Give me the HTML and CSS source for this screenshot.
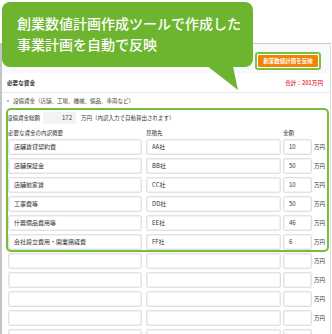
FILE: index.html
```html
<!DOCTYPE html>
<html lang="ja">
<head>
<meta charset="utf-8">
<link rel="stylesheet" href="styles.css">
</head>
<body>
<div class="frame">
  <div class="head">
    <div class="ring"><div class="btn">創業数値計画を反映</div></div>
  </div>
  <div class="title-row">
    <span class="title">必要な資金</span>
    <span class="total">合計：201万円</span>
  </div>
  <div class="sub"><span class="dot"></span>設備資金（店舗、工場、機械、備品、車両など）</div>
  <div class="detail">
    <div class="sum-row">
      <span class="sum-label">設備資金総額</span>
      <span class="sum-box">172</span>
      <span class="sum-note">万円（内訳入力で自動算出されます）</span>
    </div>
    <div class="thead">
      <span class="c1 h">必要な資金の内訳概要</span>
      <span class="c2 h">見積先</span>
      <span class="c3 h">金額</span>
    </div>
    <div class="row"><span class="box c1">店舗賃貸契約費</span><span class="box c2">AA社</span><span class="box c3">10</span><span class="unit">万円</span></div>
    <div class="row"><span class="box c1">店舗保証金</span><span class="box c2">BB社</span><span class="box c3">50</span><span class="unit">万円</span></div>
    <div class="row"><span class="box c1">店舗前家賃</span><span class="box c2">CC社</span><span class="box c3">10</span><span class="unit">万円</span></div>
    <div class="row"><span class="box c1">工事費等</span><span class="box c2">DD社</span><span class="box c3">50</span><span class="unit">万円</span></div>
    <div class="row"><span class="box c1">什器備品費用等</span><span class="box c2">EE社</span><span class="box c3">46</span><span class="unit">万円</span></div>
    <div class="row"><span class="box c1">会社設立費用・開業諸経費</span><span class="box c2">FF社</span><span class="box c3">6</span><span class="unit">万円</span></div>
    <div class="row"><span class="box c1"></span><span class="box c2"></span><span class="box c3"></span><span class="unit">万円</span></div>
    <div class="row"><span class="box c1"></span><span class="box c2"></span><span class="box c3"></span><span class="unit">万円</span></div>
    <div class="row"><span class="box c1"></span><span class="box c2"></span><span class="box c3"></span><span class="unit">万円</span></div>
    <div class="row"><span class="box c1"></span><span class="box c2"></span><span class="box c3"></span><span class="unit">万円</span></div>
    <div class="row"><span class="box c1"></span><span class="box c2"></span><span class="box c3"></span></div>
    <div class="highlight"></div>
  </div>
</div>
<div class="bubble">創業数値計画作成ツールで作成した<br>事業計画を自動で反映</div>
</body>
</html>
```

FILE: styles.css
```css
html, body {
  margin: 0;
  padding: 0;
  background: #ffffff;
  overflow: hidden;
}
body {
  width: 332px;
  height: 334px;
  position: relative;
  font-family: "Noto Sans CJK JP", "Noto Sans", sans-serif;
  color: #333;
}
.frame {
  margin-top: 43px;
  width: 328px;
  border-top: 1px solid #c9c9c9;
  border-left: 2px solid #c4c4c4;
  border-right: 1px solid #dcdcdc;
  height: 300px;
}
.head {
  height: 29px;
  background: #f7f9fb;
  display: flex;
  justify-content: flex-end;
  align-items: flex-start;
  padding-top: 8px;
  padding-right: 9px;
  box-sizing: border-box;
}
.ring {
  border: 2px solid #79c143;
  border-radius: 3px;
  padding: 1px;
  background: #fff;
}
.btn {
  width: 60px;
  height: 12px;
  background: #f08300;
  color: #fff;
  font-size: 5.5px;
  font-weight: bold;
  line-height: 12px;
  text-align: center;
  border-radius: 1px;
}
.title-row {
  height: 19px;
  display: flex;
  justify-content: space-between;
  align-items: center;
  padding: 0 7px 0 5px;
  border-bottom: 1px solid #e6e6e6;
}
.title {
  font-size: 5.6px;
  font-weight: bold;
}
.total {
  font-size: 5.6px;
  font-weight: bold;
  color: #e8464f;
}
.sub {
  height: 15px;
  display: flex;
  align-items: center;
  padding-left: 5px;
  font-size: 5.5px;
  color: #444;
}
.dot {
  width: 2px;
  height: 2px;
  background: #a9bccb;
  margin-right: 4px;
}
.detail {
  position: relative;
}
.sum-row {
  display: flex;
  align-items: center;
  padding: 4px 0 0 5px;
  height: 12px;
  font-size: 5.5px;
}
.sum-label {
  width: 36px;
}
.sum-box {
  width: 33px;
  height: 12px;
  background: #f3f3f3;
  text-align: right;
  line-height: 12px;
  padding-right: 4px;
  box-sizing: border-box;
  font-size: 6px;
}
.sum-note {
  margin-left: 5px;
}
.thead {
  display: flex;
  align-items: flex-end;
  height: 15px;
  padding-left: 6px;
  padding-bottom: 2px;
  box-sizing: border-box;
  font-size: 5.5px;
  line-height: 8px;
}
.row {
  display: flex;
  align-items: center;
  height: 16px;
  margin-bottom: 3px;
  padding-left: 6px;
}
.c1 { width: 134px; margin-right: 4px; }
.c2 { width: 135px; margin-right: 2px; }
.c3 { width: 29px; margin-right: 2px; }
.h { display: block; }
.box {
  height: 16px;
  box-sizing: border-box;
  border: 1px solid #e2e2e2;
  box-shadow: inset 0 0 0 1px #f2f2f2;
  border-radius: 2px;
  background: #fff;
  font-size: 6px;
  line-height: 14px;
  padding-left: 5px;
  color: #333;
  white-space: nowrap;
}
.unit {
  font-size: 5.5px;
  color: #333;
}
.highlight {
  position: absolute;
  left: 4px;
  top: 0;
  width: 323px;
  height: 144px;
  box-sizing: border-box;
  border: 2px solid #76bd3d;
  border-radius: 5px;
  pointer-events: none;
}
.bubble {
  position: absolute;
  left: 2px;
  top: 2px;
  width: 251px;
  height: 65px;
  box-sizing: border-box;
  background: #6db52f;
  border-radius: 8px;
  color: #fff;
  font-size: 14px;
  font-weight: 500;
  line-height: 21px;
  padding: 11px 0 0 15px;
  white-space: nowrap;
}
.bubble::after {
  content: "";
  position: absolute;
  left: 200px;
  top: 60px;
  width: 36px;
  height: 28px;
  background: #6db52f;
  clip-path: polygon(0 0, 30px 0, 36px 100%);
}
```
